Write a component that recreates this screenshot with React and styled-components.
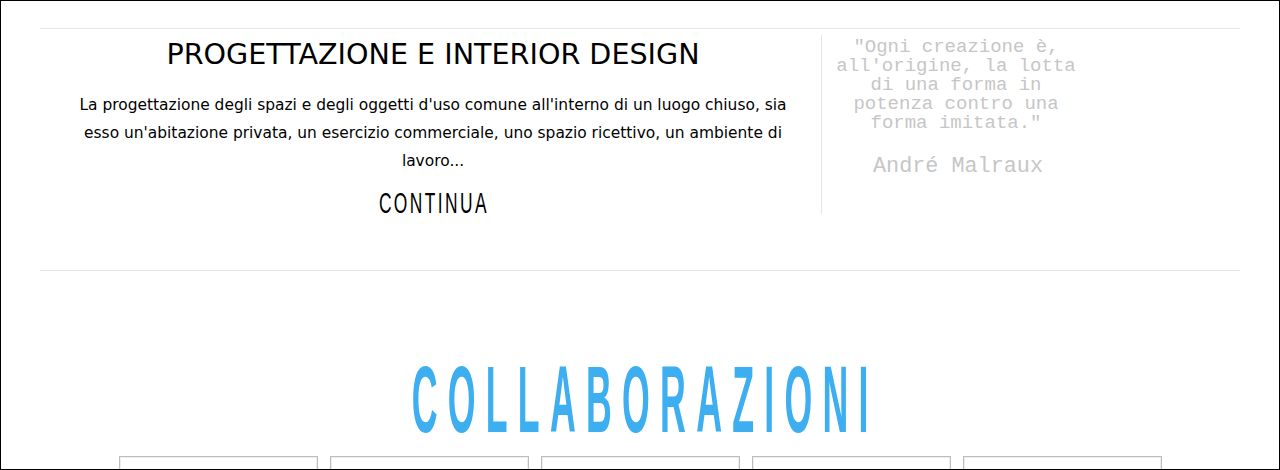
import React from "react";
import styled, { createGlobalStyle } from "styled-components";

const Global = createGlobalStyle`
  html, body { margin: 0; padding: 0; background: #fff; }
  body { font-family: "DejaVu Sans", "Liberation Sans", sans-serif; }
`;

const Page = styled.div`
  width: 1280px;
  height: 470px;
  box-sizing: border-box;
  border: 1px solid #000;
  overflow: hidden;
  background: #fff;
`;

const Wrap = styled.div`
  padding: 27px 39px 0;
`;

const Rule = styled.hr`
  border: 0;
  height: 1px;
  background: #e6e6e6;
  margin: ${(p) => p.$top || 0}px 0 0;
`;

const Feature = styled.section`
  display: flex;
  align-items: stretch;
  margin-top: 6px;
`;

const Main = styled.div`
  flex: 0 0 781px;
  box-sizing: border-box;
  padding: 2px 27px 0 32px;
  text-align: center;
`;

const Title = styled.h1`
  margin: 0;
  font-family: "DejaVu Sans", sans-serif;
  font-weight: normal;
  font-size: 28.6px;
  line-height: 34px;
  color: #000;
`;

const Text = styled.p`
  margin: 20px 0 17px;
  font-family: "DejaVu Sans", sans-serif;
  font-size: 15.45px;
  line-height: 28px;
  color: #000;
`;

const Condensed = styled.div`
  display: flex;
  justify-content: center;
  white-space: nowrap;
  font-family: "Liberation Sans", Arial, sans-serif;
  font-size: ${(p) => p.$size}px;
  line-height: ${(p) => p.$lh}px;
  font-weight: ${(p) => p.$weight || 400};
  color: ${(p) => p.$color};
  & > span {
    display: inline-block;
    letter-spacing: ${(p) => p.$ls}px;
    padding-left: ${(p) => p.$ls}px;
    transform: scaleX(${(p) => p.$sx});
    transform-origin: center;
  }
`;

const Aside = styled.aside`
  flex: 1;
  border-left: 1px solid #e6e6e6;
  padding: 3px 0 0 5px;
`;

const Quote = styled.blockquote`
  margin: 0;
  width: 258px;
  text-align: center;
  font-family: "Liberation Mono", "Courier New", monospace;
  color: #c6c6c6;
`;

const QuoteText = styled.p`
  margin: 0;
  font-size: 19px;
  line-height: 19px;
`;

const Author = styled.cite`
  display: block;
  margin-top: 22px;
  padding-left: 4px;
  font-style: normal;
  font-size: 21.8px;
  line-height: 24px;
`;

const Collab = styled.section`
  padding-top: 79px;
`;

const Cards = styled.div`
  display: flex;
  justify-content: center;
  gap: 12px;
  margin-top: 6px;
`;

const Card = styled.div`
  width: 199px;
  height: 120px;
  box-sizing: border-box;
  border: 1px solid #bdbdbd;
  box-shadow: inset 0 0 0 1px #eeeeee;
  background: #fff;
`;

export default function App() {
  return (
    <>
      <Global />
      <Page>
        <Wrap>
          <Rule />
          <Feature>
            <Main>
              <Title>PROGETTAZIONE E INTERIOR DESIGN</Title>
              <Text>
                La progettazione degli spazi e degli oggetti d'uso comune all'interno di un luogo chiuso, sia
                esso un'abitazione privata, un esercizio commerciale, uno spazio ricettivo, un ambiente di
                lavoro...
              </Text>
              <Condensed $size={29} $lh={22} $ls={4} $sx={0.6} $color="#000">
                <span>CONTINUA</span>
              </Condensed>
            </Main>
            <Aside>
              <Quote>
                <QuoteText>"Ogni creazione è, all'origine, la lotta di una forma in potenza contro una forma imitata."</QuoteText>
                <Author>André Malraux</Author>
              </Quote>
            </Aside>
          </Feature>
          <Rule $top={56} />
          <Collab>
            <Condensed $size={94} $lh={100} $ls={27} $sx={0.38} $weight={700} $color="#3daef0">
              <span>COLLABORAZIONI</span>
            </Condensed>
            <Cards>
              <Card />
              <Card />
              <Card />
              <Card />
              <Card />
            </Cards>
          </Collab>
        </Wrap>
      </Page>
    </>
  );
}
